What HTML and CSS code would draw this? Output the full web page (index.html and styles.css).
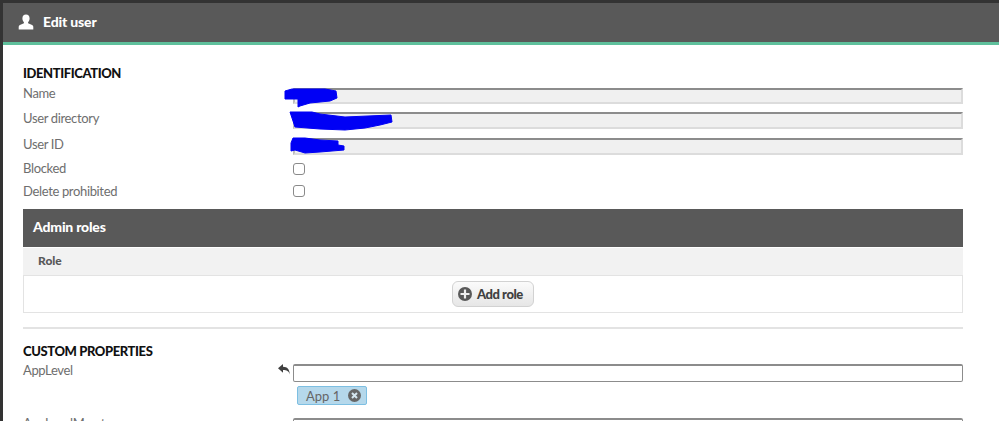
FILE: index.html
```html
<!DOCTYPE html>
<html lang="en">
<head>
<meta charset="utf-8">
<title>Edit user</title>
<link rel="stylesheet" href="styles.css">
</head>
<body>
<div class="window">
  <header class="topbar">
    <svg class="user-icon" width="16" height="16" viewBox="0 0 16 16" aria-hidden="true"><path d="M8 0.5C5.7 0.5 4.4 2.2 4.4 4.4c0 1.5.6 2.9 1.5 3.7v1.1L1.9 11c-.8.4-1.2 1-1.2 1.8v2.7h14.6v-2.7c0-.8-.4-1.4-1.2-1.8l-4-1.8V8.1c.9-.8 1.5-2.2 1.5-3.7C11.6 2.2 10.3.5 8 .5z" fill="#fff"/></svg>
    <h1 class="topbar-title">Edit user</h1>
  </header>
  <main class="content">
    <h2 class="section-title">IDENTIFICATION</h2>
    <div class="row row-short"><span class="label">Name</span><input class="field field-short" readonly></div>
    <div class="row row-tall"><span class="label label-low">User directory</span><input class="field" readonly></div>
    <div class="row"><span class="label label-low">User ID</span><input class="field" readonly></div>
    <div class="row row-check"><span class="label">Blocked</span><input class="check" type="checkbox"></div>
    <div class="row row-check"><span class="label label-low">Delete prohibited</span><input class="check" type="checkbox"></div>

    <section class="panel">
      <h3 class="panel-title">Admin roles</h3>
      <div class="panel-columns">Role</div>
      <div class="panel-body">
        <button class="add-btn" type="button">
          <svg width="14" height="14" viewBox="0 0 14 14" aria-hidden="true"><circle cx="7" cy="7" r="7" fill="#595959"/><path d="M7 2.5v9M2.5 7h9" stroke="#f0f0f0" stroke-width="2.2"/></svg>
          Add role
        </button>
      </div>
    </section>
    <hr class="divider">

    <h2 class="section-title">CUSTOM PROPERTIES</h2>
    <div class="row row-prop">
      <span class="label label-prop">AppLevel
        <svg class="undo" width="12" height="11" viewBox="0 0 12 11" aria-hidden="true"><path d="M0 4.2L5 0v2.7c4.4 0 6.6 2.7 6.8 7.8-1.1-3.3-3-4.4-6.8-4.4v2.6z" fill="#404040"/></svg>
      </span>
      <div class="prop-value">
        <input class="field field-edit">
        <span class="chip">App 1
          <svg width="13" height="13" viewBox="0 0 13 13" aria-hidden="true"><circle cx="6.5" cy="6.5" r="6.5" fill="#666"/><path d="M4 4l5 5M9 4l-5 5" stroke="#d5e6ef" stroke-width="2"/></svg>
        </span>
      </div>
    </div>
    <div class="row"><span class="label">AppLevelMgmt</span><input class="field field-edit"></div>
  </main>
  <svg class="scribbles" width="999" height="421" viewBox="0 0 999 421" aria-hidden="true">
    <path d="M285 91L292 89H325L336 91L337 98L330 101L310 103L300 106L298 107V99H285z"/>
    <path d="M290 112H312L320 114L345 117L391 115L392 122L380 125L365 128L345 130L320 129L295 127L292 118z"/>
    <path d="M293 138H305L320 140L338 141V145L344 146V150L320 152L305 153L295 150L291 151V143z"/>
  </svg>
</div>
</body>
</html>
```
FILE: styles.css
```css
html, body {
  margin: 0;
  height: 421px;
  overflow: hidden;
}
body {
  background: #333;
  font-family: "Lato", "Noto Sans", sans-serif;
  color: #666;
}
.window {
  position: relative;
  height: 421px;
  box-sizing: border-box;
  padding: 3px 0 0 3px;
  overflow: hidden;
}
.topbar {
  display: flex;
  align-items: center;
  height: 39px;
  padding-left: 15px;
  background: #595959;
  border-bottom: 3px solid #5fc09c;
}
.user-icon { margin-top: -2px; }
.topbar-title {
  margin: -2px 0 0 9px;
  font-size: 14px;
  font-weight: 900;
  letter-spacing: -0.15px;
  color: #fff;
}
.content {
  background: #fff;
  height: 376px;
  box-sizing: border-box;
  padding: 18px 36px 0 20px;
}
.section-title {
  margin: 0;
  height: 18px;
  line-height: 20px;
  font-size: 13px;
  font-weight: 900;
  letter-spacing: -0.4px;
  color: #111;
}
.section-title + .row { margin-top: 7px; }
.row {
  display: grid;
  grid-template-columns: 270px 1fr;
  height: 25px;
}
.row-short { height: 24px; }
.row-tall { height: 26px; }
.row-check { height: 22px; }
.section-title + .row-prop { height: 54px; margin-top: 5px; }
.label {
  font-size: 13px;
  letter-spacing: -0.35px;
  line-height: 17px;
  margin-top: -3px;
  color: #6e6e6e;
}
.label-low { margin-top: -2px; }
.label-prop {
  display: flex;
  justify-content: space-between;
  align-items: flex-start;
  margin-top: -2px;
}
.undo { margin: 2px 3px 0 0; }
.field {
  display: block;
  width: 100%;
  height: 17px;
  box-sizing: border-box;
  margin: 0;
  padding: 0;
  background: #f0f0f0;
  border: 2px solid #dcdcdc;
  border-top-color: #8c8c8c;
  border-left-color: #bdbdbd;
  border-radius: 0;
  outline: none;
}
.field-short { height: 16px; }
.field-edit {
  height: 18px;
  background: #fff;
  border: 1px solid #8c8c8c;
  border-top-width: 2px;
  border-radius: 2px;
}
.check {
  appearance: none;
  width: 12px;
  height: 12px;
  margin: 0;
  background: #fff;
  border: 1px solid #8a8a8a;
  border-radius: 3px;
  justify-self: start;
}
.panel { margin-top: 2px; }
.panel-title {
  margin: 0;
  height: 38px;
  line-height: 36px;
  padding-left: 10px;
  background: #595959;
  font-size: 14px;
  font-weight: 900;
  letter-spacing: -0.2px;
  color: #fff;
}
.panel-columns {
  margin-top: 1px;
  height: 27px;
  line-height: 26px;
  padding-left: 15px;
  background: #f2f2f2;
  font-size: 12px;
  font-weight: 900;
  color: #595959;
}
.panel-body {
  display: flex;
  justify-content: center;
  align-items: center;
  height: 38px;
  box-sizing: border-box;
  background: #fff;
  border: 1px solid #e3e3e3;
}
.add-btn {
  display: flex;
  align-items: center;
  gap: 5px;
  width: 82px;
  height: 26px;
  box-sizing: border-box;
  margin: 0;
  padding: 0 0 0 5px;
  font-family: inherit;
  font-size: 13px;
  font-weight: 900;
  letter-spacing: -0.45px;
  color: #404040;
  background: linear-gradient(#fbfbfb, #e6e6e6);
  border: 1px solid #d2d2d2;
  border-radius: 6px;
}
.divider {
  margin: 14px 0 12px;
  height: 2px;
  border: 0;
  background: #e3e3e3;
}
.prop-value {
  display: flex;
  flex-direction: column;
  align-items: flex-start;
}
.chip {
  display: flex;
  align-items: center;
  justify-content: space-between;
  width: 70px;
  height: 19px;
  box-sizing: border-box;
  margin: 4px 0 0 4px;
  padding: 0 5px 0 8px;
  background: #b5d8eb;
  border: 1px solid #7dbfe2;
  border-radius: 2px;
  font-size: 13px;
  color: #666;
}
.scribbles {
  position: absolute;
  top: 0;
  left: 0;
  pointer-events: none;
}
.scribbles path { fill: #0000f5; stroke: #0000f5; stroke-width: 1; stroke-linejoin: round; }
```
